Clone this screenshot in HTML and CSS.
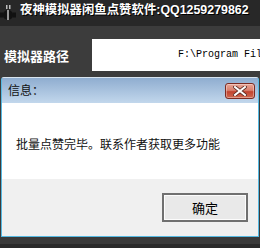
FILE: index.html
```html
<!DOCTYPE html>
<html>
<head>
<meta charset="utf-8">
<link rel="stylesheet" href="styles.css">
</head>
<body>
<div class="app">
  <header class="titlebar">
    <svg class="appicon" width="16" height="18" viewBox="0 0 16 18">
      <rect x="6" y="2" width="1.5" height="4" fill="#bdbdbd"/>
      <rect x="9" y="2" width="1.5" height="4" fill="#bdbdbd"/>
      <ellipse cx="8" cy="12" rx="5" ry="5" fill="#111"/>
      <rect x="0" y="9.5" width="3.5" height="5" fill="#111"/>
      <rect x="12.5" y="9.5" width="3.5" height="5" fill="#111"/>
      <rect x="7.3" y="7" width="1.4" height="10" fill="#cfcfcf"/>
    </svg>
    <span class="title">夜神模拟器闲鱼点赞软件:QQ1259279862</span>
  </header>
  <div class="pathrow">
    <span class="label">模拟器路径</span>
    <div class="pathbox">F:\Program Fil</div>
  </div>
  <div class="dialog">
    <div class="dlg-head">
      <span class="dlg-title">信息：</span>
      <button class="close" aria-label="关闭">
        <svg width="14" height="10" viewBox="0 0 14 10">
          <path d="M2 1 L12 9 M12 1 L2 9" stroke="#5a2a22" stroke-width="3.6" stroke-linecap="square"/>
          <path d="M2 1 L12 9 M12 1 L2 9" stroke="#ffffff" stroke-width="2" stroke-linecap="square"/>
        </svg>
      </button>
    </div>
    <div class="dlg-body">批量点赞完毕。联系作者获取更多功能</div>
    <div class="dlg-foot">
      <button class="ok">确定</button>
    </div>
  </div>
  <div class="bottom"></div>
</div>
</body>
</html>
```
FILE: styles.css
```css
* { box-sizing: border-box; }
html, body { margin: 0; padding: 0; }
body {
  width: 260px;
  height: 248px;
  overflow: hidden;
  background: #3c3c3c;
  font-family: "Liberation Sans", "Noto Sans CJK SC", sans-serif;
}
.app { display: flex; flex-direction: column; height: 248px; }
.titlebar {
  height: 26px;
  background: #282828;
  display: flex;
  align-items: flex-start;
  padding-top: 2px;
}
.appicon { margin-top: 1px; margin-right: 4px; flex: none; }
.title {
  color: #fff;
  font-size: 12.4px;
  font-weight: bold;
  line-height: 16px;
  text-shadow: 1px 1px 0 #000;
  white-space: nowrap;
}
.pathrow {
  display: flex;
  align-items: center;
  margin-top: 13px;
  height: 32px;
}
.label {
  width: 92px;
  padding-left: 4px;
  color: #fff;
  font-size: 13px;
  font-weight: bold;
  white-space: nowrap;
}
.pathbox {
  flex: 1;
  height: 32px;
  background: #fff;
  font-family: "Liberation Mono", monospace;
  font-size: 10px;
  line-height: 32px;
  padding-left: 86px;
  white-space: nowrap;
  overflow: hidden;
  color: #000;
}
.dialog {
  margin-top: 6px;
  margin-left: 1px;
  width: 258px;
  height: 160px;
  border: 1px solid #55b9e2;
  border-top-color: #d8e4ef;
  border-radius: 3px 3px 0 0;
  display: flex;
  flex-direction: column;
  background: #fff;
}
.dlg-head {
  height: 25px;
  background: linear-gradient(#8fadd0, #c2d7ec);
  display: flex;
  align-items: flex-start;
  justify-content: space-between;
  padding: 0 3px 0 6px;
}
.dlg-title {
  font-size: 12px;
  line-height: 18px;
  margin-top: 4px;
  color: #111;
}
.close {
  margin-top: 5px;
  width: 30px;
  height: 16px;
  padding: 0;
  border: 1px solid #7c2b22;
  border-radius: 3px;
  background: linear-gradient(#e8a596 0%, #d9806e 45%, #c2432f 55%, #cf6a52 100%);
  display: flex;
  align-items: center;
  justify-content: center;
  box-shadow: inset 0 0 0 1px rgba(255,255,255,0.35);
}
.close svg { display: block; }
.dlg-body {
  height: 76px;
  padding: 33px 0 0 14px;
  font-size: 12px;
  line-height: 16px;
  color: #111;
  font-family: "Noto Sans CJK SC", sans-serif;
}
.dlg-foot {
  flex: 1;
  background: #f0f0f0;
  display: flex;
  justify-content: flex-end;
  align-items: flex-start;
  padding: 14px 10px 0 0;
}
.ok {
  width: 86px;
  height: 29px;
  border: 2px solid #707070;
  box-shadow: inset 0 0 0 1px #fcfcfc;
  background: #e9e9e9;
  font-family: "Noto Sans CJK SC", sans-serif;
  font-size: 13px;
  color: #000;
  padding: 0;
}
.bottom {
  flex: 1;
  background: linear-gradient(#3a3a3a 0, #3a3a3a 60%, #2a2a2a 60%);
}
```
